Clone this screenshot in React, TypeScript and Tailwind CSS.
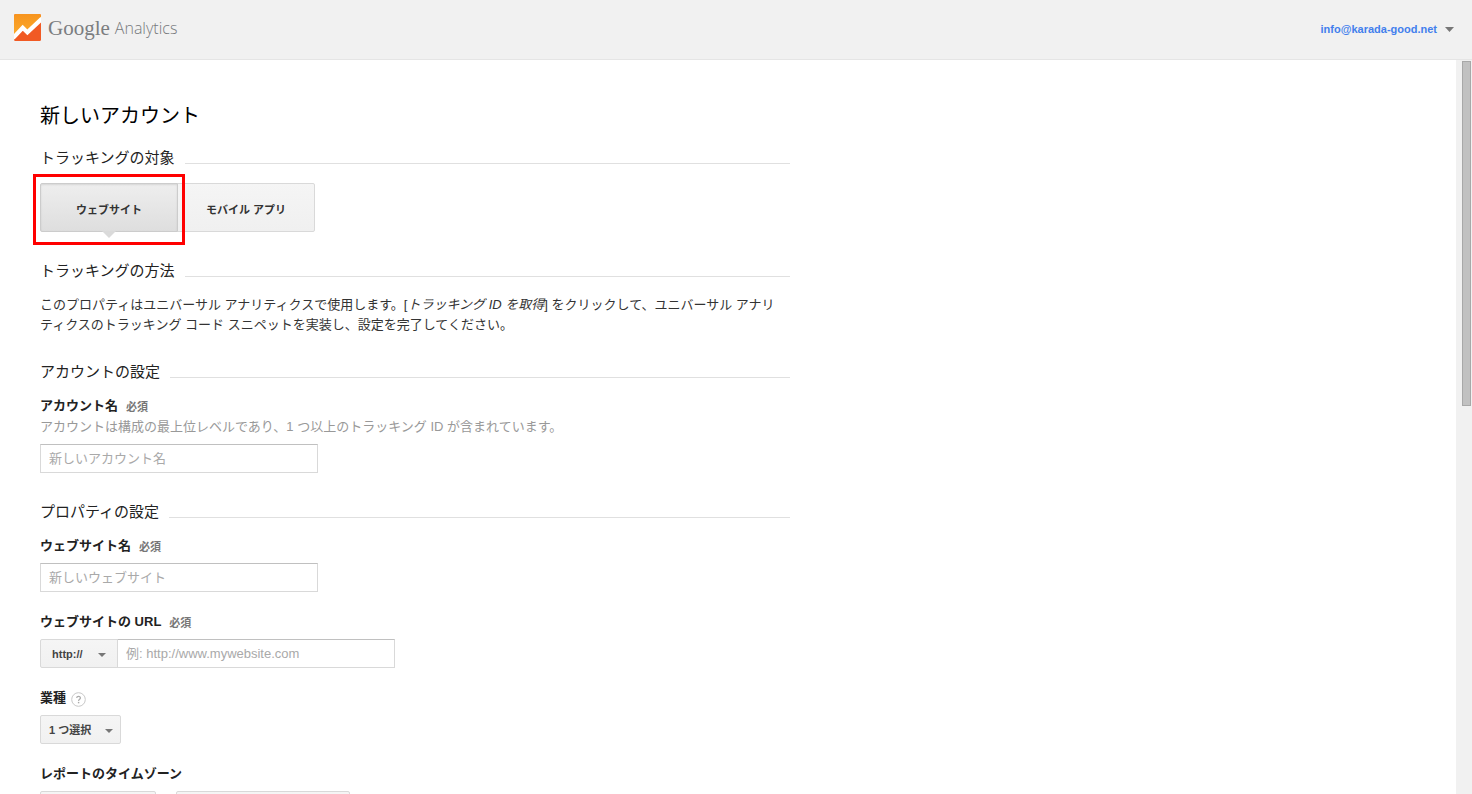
import { useState } from "react";
import type { ReactNode } from "react";
import clsx from "clsx";

const TARGETS = ["ウェブサイト", "モバイル アプリ"];

function Logo() {
  return (
    <a href="#" className="flex items-center" aria-label="Google Analytics">
      <svg width="27" height="27" viewBox="0 0 27 27" aria-hidden="true">
        <defs>
          <linearGradient id="logo-top" x1="0" y1="0" x2="0" y2="1">
            <stop offset="0" stopColor="#f7941e" />
            <stop offset="1" stopColor="#fbab2c" />
          </linearGradient>
          <clipPath id="logo-clip">
            <rect width="27" height="27" rx="1.5" />
          </clipPath>
        </defs>
        <g clipPath="url(#logo-clip)">
          <rect width="27" height="27" fill="#f15a24" />
          <path d="M0 0H27V5L14 18L8.5 14L0 22Z" fill="url(#logo-top)" />
          <path d="M-1 24L8.7 13.8L13.4 18.4L28 4.6" fill="none" stroke="#fff" strokeWidth="4.2" />
        </g>
      </svg>
      <span className="ml-[7px] font-['Liberation_Serif',serif] text-[21px] leading-7 text-[#7b7d80]">
        Google
      </span>
      <span className="ml-[5px] font-['Open_Sans',sans-serif] text-[16px] leading-7 font-light text-[#77797c]">
        Analytics
      </span>
    </a>
  );
}

function Caret() {
  return (
    <svg width="9" height="5" viewBox="0 0 9 5" aria-hidden="true">
      <path d="M0 0H9L4.5 5Z" fill="#777" />
    </svg>
  );
}

function Header() {
  return (
    <header className="flex h-[60px] shrink-0 items-center justify-between border-b border-[#e5e5e5] bg-[#f1f1f1] pr-[18px] pb-1 pl-[14px]">
      <Logo />
      <button type="button" className="mt-1 flex items-center gap-2 text-[11px] font-bold text-[#427fed]">
        info@karada-good.net
        <Caret />
      </button>
    </header>
  );
}

function SectionTitle({ children }: { children: ReactNode }) {
  return (
    <div className="flex items-center gap-[10px]">
      <h2 className="text-[15px] leading-5 text-[#222]">{children}</h2>
      <span className="mt-[10px] h-px flex-1 bg-[#e0e0e0]" />
    </div>
  );
}

function FieldLabel({ htmlFor, required, children }: { htmlFor: string; required?: boolean; children: ReactNode }) {
  return (
    <label htmlFor={htmlFor} className="flex h-5 items-center gap-2 text-[13px] leading-5 font-bold text-[#222]">
      {children}
      {required && <span className="pt-px text-[11px] text-[#777]">必須</span>}
    </label>
  );
}

function TextInput({ id, placeholder, className }: { id: string; placeholder: string; className?: string }) {
  return (
    <input
      id={id}
      type="text"
      placeholder={placeholder}
      className={clsx(
        "block h-[29px] w-[278px] border border-[#d9d9d9] border-t-[#c0c0c0] bg-white px-2 text-[13px] text-[#333] outline-none placeholder:text-[#a9a9a9] focus:border-[#4d90fe]",
        className
      )}
    />
  );
}

interface SelectBoxProps {
  id: string;
  options: string[];
  label?: string;
  wide?: boolean;
  className?: string;
}

function SelectBox({ id, options, label, wide, className }: SelectBoxProps) {
  return (
    <div className="relative w-fit">
      <select
        id={id}
        aria-label={label}
        className={clsx(
          "block h-[29px] appearance-none border border-[#d9d9d9] bg-linear-to-b from-[#f5f5f5] to-[#f1f1f1] pt-px text-[11px] font-bold text-[#444] outline-none",
          wide ? "rounded-l-xs pl-[11px]" : "rounded-xs pl-2",
          className
        )}
      >
        {options.map((o) => (
          <option key={o}>{o}</option>
        ))}
      </select>
      <svg
        width="8"
        height="4"
        viewBox="0 0 8 4"
        className={clsx("pointer-events-none absolute top-[14px]", wide ? "right-3" : "right-2")}
        aria-hidden="true"
      >
        <path d="M0 0H8L4 4Z" fill="#777" />
      </svg>
    </div>
  );
}

function TargetTabs() {
  const [active, setActive] = useState(0);

  return (
    <div className="relative mt-[15px] flex">
      {TARGETS.map((target, i) => (
        <button
          key={target}
          type="button"
          onClick={() => setActive(i)}
          className={clsx(
            "relative h-[49px] w-[138px] border pt-[6px] text-[11px] font-bold text-[#333]",
            i === 0 ? "rounded-l-xs" : "-ml-px rounded-r-xs",
            i === active
              ? "z-10 border-[#ccc] bg-linear-to-b from-[#eee] to-[#dedede] shadow-[inset_0_1px_2px_rgba(0,0,0,0.1)]"
              : "border-[#d9d9d9] bg-linear-to-b from-[#f5f5f5] to-[#f0f0f0]"
          )}
        >
          {target}
          {i === active && (
            <svg
              width="14"
              height="7"
              viewBox="0 0 14 7"
              className="absolute top-full left-1/2 -translate-x-1/2"
              aria-hidden="true"
            >
              <path d="M0 0H14L7 7Z" fill="#dadada" />
            </svg>
          )}
        </button>
      ))}
      <span className="pointer-events-none absolute -top-[9px] -left-[7px] z-20 h-[71px] w-[152px] border-3 border-[#f00]" />
    </div>
  );
}

function HelpIcon() {
  return (
    <svg width="15" height="15" viewBox="0 0 15 15" className="mt-[3px] -ml-[3px]" aria-hidden="true">
      <circle cx="7.5" cy="7.5" r="6.8" fill="#fff" stroke="#c8c8c8" />
      <path d="M5.7 6.1C5.7 3.9 9.4 3.9 9.4 6C9.4 7.3 7.6 7.3 7.6 8.9" fill="none" stroke="#aaa" strokeWidth="1.2" />
      <rect x="6.9" y="9.9" width="1.4" height="1.4" fill="#aaa" />
    </svg>
  );
}

function AccountForm() {
  return (
    <form className="w-full max-w-[790px] pt-[41px] pl-10">
      <h1 className="mb-[17px] text-[20px] leading-[30px] text-black">新しいアカウント</h1>

      <SectionTitle>トラッキングの対象</SectionTitle>
      <TargetTabs />

      <div className="mt-[29px]">
        <SectionTitle>トラッキングの方法</SectionTitle>
        <p className="mt-[14px] pr-2 text-[13px] leading-5 text-[#333]">
          このプロパティはユニバーサル アナリティクスで使用します。[<em>トラッキング ID を取得</em>]
          をクリックして、ユニバーサル アナリティクスのトラッキング コード スニペットを実装し、設定を完了してください。
        </p>
      </div>

      <div className="mt-[27px]">
        <SectionTitle>アカウントの設定</SectionTitle>
        <div className="mt-[14px] space-y-[7px]">
          <div>
            <FieldLabel htmlFor="account-name" required>
              アカウント名
            </FieldLabel>
            <p className="mt-px text-[13px] leading-5 text-[#999]">
              アカウントは構成の最上位レベルであり、1 つ以上のトラッキング ID が含まれています。
            </p>
          </div>
          <TextInput id="account-name" placeholder="新しいアカウント名" />
        </div>
      </div>

      <div className="mt-[29px]">
        <SectionTitle>プロパティの設定</SectionTitle>
        <div className="mt-[14px] space-y-5">
          <div className="space-y-[7px]">
            <FieldLabel htmlFor="site-name" required>
              ウェブサイト名
            </FieldLabel>
            <TextInput id="site-name" placeholder="新しいウェブサイト" />
          </div>
          <div className="space-y-[7px]">
            <FieldLabel htmlFor="site-url" required>
              ウェブサイトの URL
            </FieldLabel>
            <div className="flex">
              <SelectBox id="protocol" label="プロトコル" options={["http://", "https://"]} wide className="w-[78px]" />
              <TextInput id="site-url" placeholder="例: http://www.mywebsite.com" className="-ml-px" />
            </div>
          </div>
          <div className="space-y-[7px]">
            <FieldLabel htmlFor="industry">
              業種
              <HelpIcon />
            </FieldLabel>
            <SelectBox id="industry" options={["1 つ選択"]} className="w-[81px]" />
          </div>
          <div className="space-y-[7px]">
            <FieldLabel htmlFor="country">レポートのタイムゾーン</FieldLabel>
            <div className="flex gap-5">
              <SelectBox id="country" options={["アメリカ合衆国"]} className="w-[116px]" />
              <SelectBox
                id="timezone"
                label="タイムゾーン"
                options={["(GMT-08:00) 太平洋時間"]}
                className="w-[174px]"
              />
            </div>
          </div>
        </div>
      </div>
    </form>
  );
}

export default function App() {
  return (
    <div
      lang="ja"
      className="flex h-screen flex-col overflow-hidden bg-white font-['Liberation_Sans','Noto_Sans_CJK_JP',sans-serif]"
    >
      <Header />
      <div className="flex min-h-0 flex-1">
        <main className="min-w-0 flex-1 overflow-hidden">
          <AccountForm />
        </main>
        <div className="w-4 shrink-0 bg-[#f1f1f1] pt-px pr-px pl-[6px]" aria-hidden="true">
          <div className="h-[47%] border border-[#a8a8a8] bg-[#c1c1c1]" />
        </div>
      </div>
    </div>
  );
}
